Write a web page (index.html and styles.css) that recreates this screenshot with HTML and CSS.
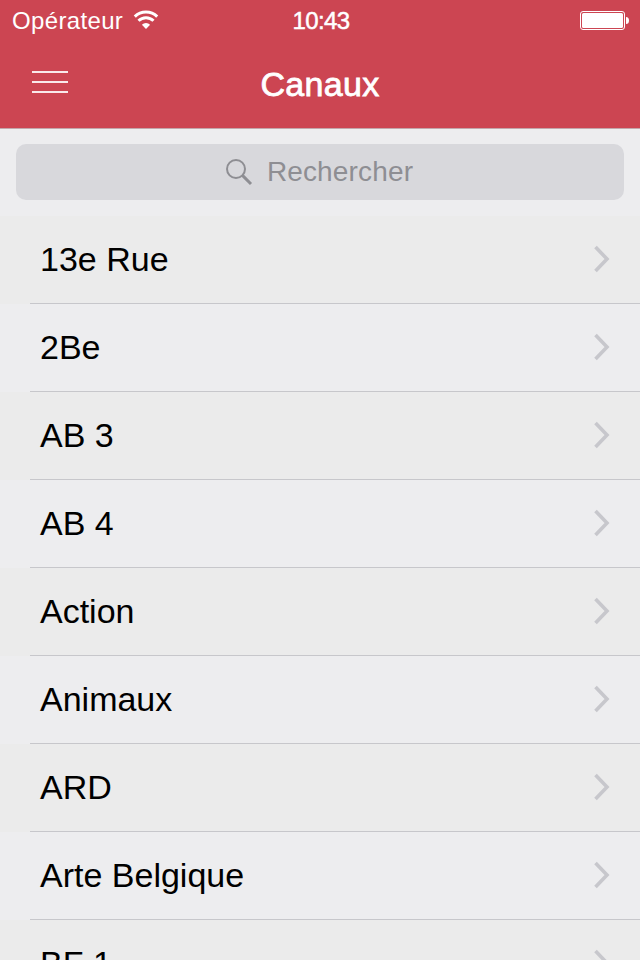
FILE: index.html
```
<!DOCTYPE html>
<html lang="fr">
<head>
  <meta charset="UTF-8">
  <title>Canaux</title>
  <link rel="stylesheet" href="styles.css">
</head>
<body>
  <svg class="symbols">
    <symbol id="chevron" viewBox="0 0 18 28">
      <path d="M2.5 2 L14 14 L2.5 26" fill="none" stroke="currentColor" stroke-width="3.6"/>
    </symbol>
  </svg>

  <header class="header">
    <div class="status-bar">
      <div class="carrier">
        <span class="carrier-name">Opérateur</span>
        <svg class="wifi" width="26" height="20" viewBox="0 0 26 20">
          <path d="M1.8 6.6 A16 16 0 0 1 24.2 6.6" fill="none" stroke="#fff" stroke-width="3"/>
          <path d="M5.5 10.8 A10.5 10.5 0 0 1 20.5 10.8" fill="none" stroke="#fff" stroke-width="3"/>
          <path d="M8.9 14.8 A5.8 5.8 0 0 1 17.1 14.8 L13 19 Z" fill="#fff"/>
        </svg>
      </div>
      <div class="time">10:43</div>
      <svg class="battery" width="50" height="20" viewBox="0 0 50 20">
        <rect x="0.5" y="1.5" width="44" height="18" rx="2.5" fill="none" stroke="#fff"/>
        <rect x="2" y="3" width="41" height="15" rx="1.5" fill="#fff"/>
        <path d="M46 7 Q49 7 49 10.5 Q49 14 46 14 Z" fill="#fff"/>
      </svg>
    </div>
    <div class="nav-bar">
      <div class="menu-btn">
        <span></span>
        <span></span>
        <span></span>
      </div>
      <h1>Canaux</h1>
    </div>
  </header>

  <div class="search-bar">
    <div class="search-field">
      <svg class="search-icon" width="28" height="28" viewBox="0 0 28 28">
        <circle cx="11" cy="11" r="9" fill="none" stroke="#8e8e93" stroke-width="2"/>
        <path d="M17.4 17.4 L26 26" stroke="#8e8e93" stroke-width="3"/>
      </svg>
      <span class="placeholder">Rechercher</span>
    </div>
  </div>

  <ul class="channels">
    <li><div class="row"><span>13e Rue</span><svg class="chevron"><use href="#chevron"/></svg></div></li>
    <li><div class="row"><span>2Be</span><svg class="chevron"><use href="#chevron"/></svg></div></li>
    <li><div class="row"><span>AB 3</span><svg class="chevron"><use href="#chevron"/></svg></div></li>
    <li><div class="row"><span>AB 4</span><svg class="chevron"><use href="#chevron"/></svg></div></li>
    <li><div class="row"><span>Action</span><svg class="chevron"><use href="#chevron"/></svg></div></li>
    <li><div class="row"><span>Animaux</span><svg class="chevron"><use href="#chevron"/></svg></div></li>
    <li><div class="row"><span>ARD</span><svg class="chevron"><use href="#chevron"/></svg></div></li>
    <li><div class="row"><span>Arte Belgique</span><svg class="chevron"><use href="#chevron"/></svg></div></li>
    <li><div class="row"><span>BF 1</span><svg class="chevron"><use href="#chevron"/></svg></div></li>
  </ul>
</body>
</html>
```
FILE: styles.css
```
body {
  margin: 0;
  height: 960px;
  overflow: hidden;
  display: flex;
  flex-direction: column;
  font-family: "Liberation Sans", Arial, sans-serif;
  color: #000;
  background-color: #ededef;
}
.symbols {
  display: none;
}
.header {
  flex: none;
  height: 128px;
  color: #fff;
  background-color: #cc4552;
  border-bottom: 1px solid #c3a6ab;
}
.status-bar {
  display: grid;
  grid-template-columns: 1fr auto 1fr;
  align-items: center;
  height: 40px;
  padding: 0 10px 0 12px;
  font-size: 24px;
}
.carrier {
  display: flex;
  align-items: center;
  gap: 10px;
}
.carrier-name {
  padding-top: 2px;
  letter-spacing: 0.35px;
}
.time {
  padding-top: 2px;
  letter-spacing: -0.6px;
  -webkit-text-stroke: 0.5px #fff;
}
.battery {
  justify-self: end;
}
.nav-bar {
  display: grid;
  grid-template-columns: 1fr auto 1fr;
  align-items: center;
  height: 88px;
  padding: 0 32px;
}
.menu-btn {
  display: flex;
  flex-direction: column;
  gap: 8px;
  width: 36px;
  padding-bottom: 4px;
}
.menu-btn span {
  height: 2px;
  background-color: #fae9eb;
}
h1 {
  margin: 0;
  font-size: 34px;
  font-weight: normal;
  letter-spacing: 0.3px;
  -webkit-text-stroke: 0.8px #fff;
}
.search-bar {
  flex: none;
  height: 56px;
  padding: 15px 16px 16px;
}
.search-field {
  display: flex;
  align-items: center;
  justify-content: center;
  box-sizing: border-box;
  height: 56px;
  padding-right: 2px;
  border-radius: 10px;
  color: #8e8e93;
  background-color: #d8d8dc;
  font-size: 28px;
}
.search-icon {
  margin-right: 14px;
}
.placeholder {
  letter-spacing: 0.15px;
}
.channels {
  list-style: none;
  margin: 0;
  padding: 0;
}
.channels li {
  padding-left: 30px;
}
.channels li:nth-child(odd) {
  background-color: #ebebeb;
}
.row {
  display: flex;
  align-items: center;
  justify-content: space-between;
  box-sizing: border-box;
  height: 88px;
  padding: 0 29px 0 10px;
  border-bottom: 1px solid #c7c7cb;
  font-size: 34px;
}
.chevron {
  width: 18px;
  height: 28px;
  margin-bottom: 1px;
  color: #c7c7cc;
}
```
